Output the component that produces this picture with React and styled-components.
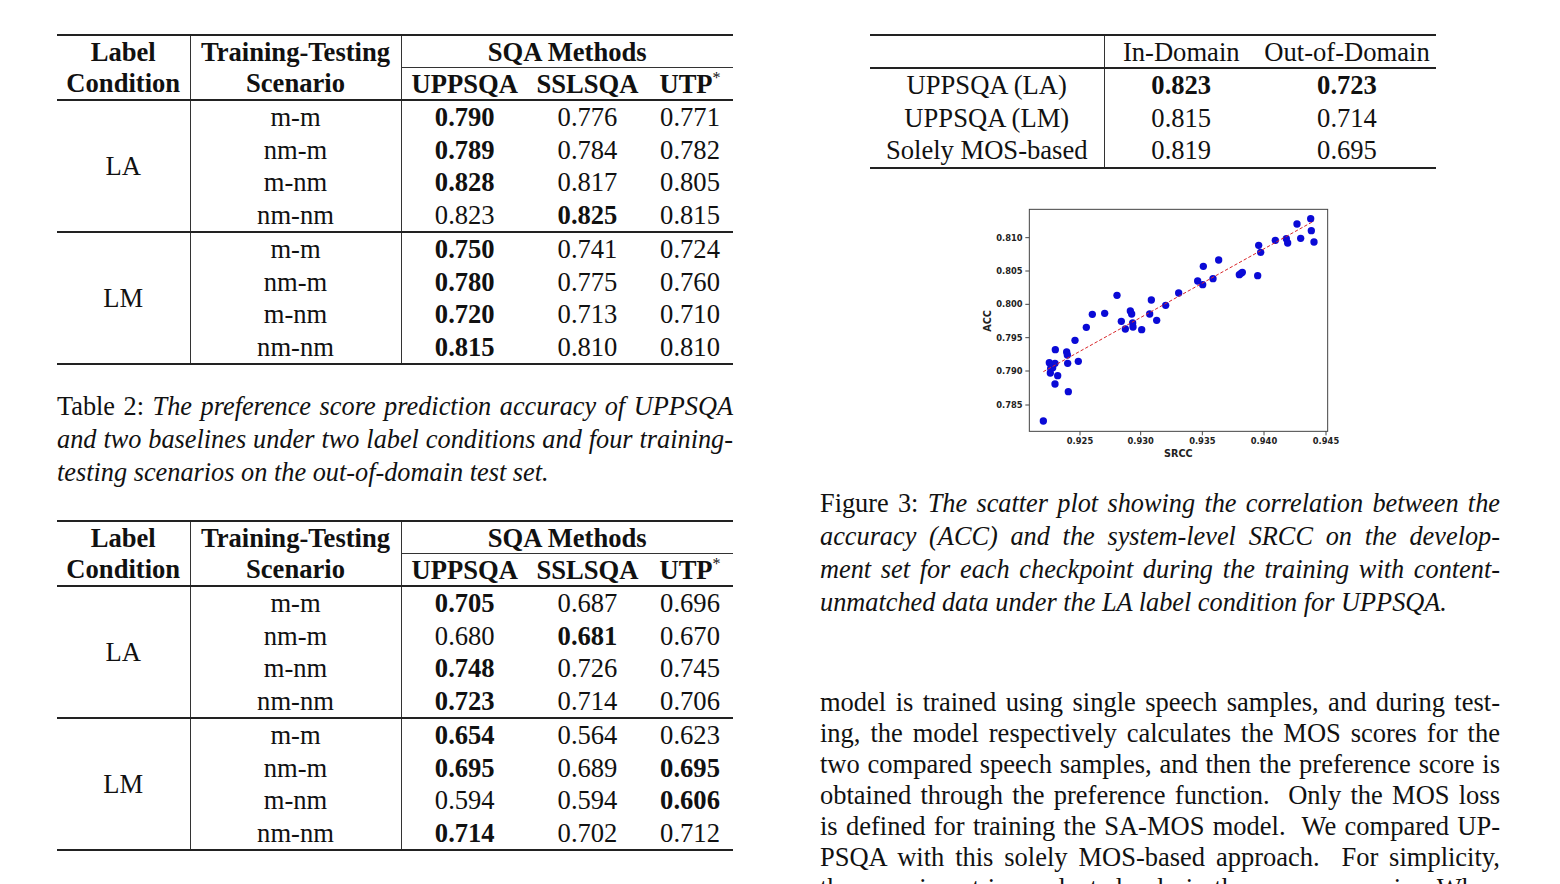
import React from "react";
import styled, { createGlobalStyle } from "styled-components";

const GlobalStyle = createGlobalStyle`
  html, body {
    margin: 0;
    padding: 0;
    background: #fff;
  }
  body {
    font-family: "Liberation Serif", "Times New Roman", serif;
    color: #111;
  }
`;

const Page = styled.div`
  display: flex;
  align-items: flex-start;
  gap: 87px;
  width: 1560px;
  height: 884px;
  padding: 34px 0 0 57px;
  box-sizing: border-box;
  overflow: hidden;
`;

const Column = styled.div`
  display: flex;
  flex-direction: column;
  width: ${(p) => p.$width}px;
  flex-shrink: 0;
`;

const Table = styled.table`
  border-collapse: collapse;
  table-layout: fixed;
  width: ${(p) => p.$width}px;
  margin: ${(p) => p.$margin || "0"};
  font-size: 26.6px;
  border-top: 2px solid #222;
  border-bottom: 2px solid #222;
`;

const Group = styled.tbody`
  border-top: 2px solid #222;
`;

const Cell = styled.td`
  height: ${(p) => (p.as === "th" ? 31 : 32.5)}px;
  padding: 0;
  line-height: 30px;
  text-align: center;
  vertical-align: middle;
  white-space: nowrap;
  font-weight: ${(p) => (p.$bold ? 700 : 400)};
  border-right: ${(p) => (p.$divider ? "1px solid #333" : "none")};
  border-bottom: ${(p) => (p.$underline ? "1px solid #333" : "none")};
`;

const Star = styled.sup`
  font-size: 16px;
  line-height: 0;
  vertical-align: 10px;
  font-weight: 400;
`;

const Caption = styled.div`
  margin-top: ${(p) => p.$top}px;
  font-size: 26.3px;
  line-height: 33px;
`;

const Line = styled.div`
  white-space: nowrap;
  text-align: justify;
  text-align-last: ${(p) => (p.$last ? "left" : "justify")};
`;

const Em = styled.i`
  font-style: italic;
`;

const Figure = styled.div`
  display: flex;
  justify-content: center;
  margin-top: 27px;
`;

const Body = styled.div`
  margin-top: 68px;
  font-size: 26.5px;
  line-height: 31px;
`;

const resultsOne = [
  {
    label: "LA",
    rows: [
      ["m-m", ["0.790", "0.776", "0.771"], [0]],
      ["nm-m", ["0.789", "0.784", "0.782"], [0]],
      ["m-nm", ["0.828", "0.817", "0.805"], [0]],
      ["nm-nm", ["0.823", "0.825", "0.815"], [1]],
    ],
  },
  {
    label: "LM",
    rows: [
      ["m-m", ["0.750", "0.741", "0.724"], [0]],
      ["nm-m", ["0.780", "0.775", "0.760"], [0]],
      ["m-nm", ["0.720", "0.713", "0.710"], [0]],
      ["nm-nm", ["0.815", "0.810", "0.810"], [0]],
    ],
  },
];

const resultsTwo = [
  {
    label: "LA",
    rows: [
      ["m-m", ["0.705", "0.687", "0.696"], [0]],
      ["nm-m", ["0.680", "0.681", "0.670"], [1]],
      ["m-nm", ["0.748", "0.726", "0.745"], [0]],
      ["nm-nm", ["0.723", "0.714", "0.706"], [0]],
    ],
  },
  {
    label: "LM",
    rows: [
      ["m-m", ["0.654", "0.564", "0.623"], [0]],
      ["nm-m", ["0.695", "0.689", "0.695"], [0, 2]],
      ["m-nm", ["0.594", "0.594", "0.606"], [2]],
      ["nm-nm", ["0.714", "0.702", "0.712"], [0]],
    ],
  },
];

const ScoreTable = ({ groups }) => (
  <Table $width={676}>
    <colgroup>
      <col style={{ width: 133 }} />
      <col style={{ width: 211 }} />
      <col style={{ width: 127 }} />
      <col style={{ width: 119 }} />
      <col style={{ width: 86 }} />
    </colgroup>
    <thead>
      <tr>
        <Cell as="th" $bold $divider>Label</Cell>
        <Cell as="th" $bold $divider>Training-Testing</Cell>
        <Cell as="th" $bold $underline colSpan={3}>SQA Methods</Cell>
      </tr>
      <tr>
        <Cell as="th" $bold $divider>Condition</Cell>
        <Cell as="th" $bold $divider>Scenario</Cell>
        <Cell as="th" $bold>UPPSQA</Cell>
        <Cell as="th" $bold>SSLSQA</Cell>
        <Cell as="th" $bold>UTP<Star>*</Star></Cell>
      </tr>
    </thead>
    {groups.map((g) => (
      <Group key={g.label}>
        {g.rows.map(([scenario, values, best], i) => (
          <tr key={scenario}>
            {i === 0 && (
              <Cell rowSpan={4} $divider>{g.label}</Cell>
            )}
            <Cell $divider>{scenario}</Cell>
            {values.map((v, j) => (
              <Cell key={j} $bold={best.includes(j)}>{v}</Cell>
            ))}
          </tr>
        ))}
      </Group>
    ))}
  </Table>
);

const domainRows = [
  ["UPPSQA (LA)", "0.823", "0.723", true],
  ["UPPSQA (LM)", "0.815", "0.714", false],
  ["Solely MOS-based", "0.819", "0.695", false],
];

const DomainTable = () => (
  <Table $width={566} $margin="0 0 0 50px">
    <colgroup>
      <col style={{ width: 234 }} />
      <col style={{ width: 154 }} />
      <col style={{ width: 178 }} />
    </colgroup>
    <thead>
      <tr>
        <Cell as="th" $divider></Cell>
        <Cell as="th">In-Domain</Cell>
        <Cell as="th">Out-of-Domain</Cell>
      </tr>
    </thead>
    <Group>
      {domainRows.map(([name, a, b, best]) => (
        <tr key={name}>
          <Cell $divider>{name}</Cell>
          <Cell $bold={best}>{a}</Cell>
          <Cell $bold={best}>{b}</Cell>
        </tr>
      ))}
    </Group>
  </Table>
);

// points read off the plot, in a 1140 x 810 drawing space
const points = [
  [220, 675], [238, 500], [241, 531], [248, 515], [255, 502], [256, 461],
  [263, 539], [255, 564], [242, 517], [290, 468], [292, 477], [293, 502],
  [295, 587], [315, 433], [325, 496], [349, 394], [367, 355], [404, 352],
  [441, 298], [454, 376], [466, 399], [481, 345], [485, 354], [488, 381],
  [489, 393], [515, 401], [539, 354], [544, 312], [560, 373], [587, 328],
  [626, 291], [683, 255], [698, 266], [700, 211], [729, 248], [746, 192],
  [808, 236], [813, 232], [817, 229], [863, 239], [866, 148], [872, 169],
  [916, 133], [949, 128], [953, 141], [981, 84], [992, 127], [1022, 68],
  [1024, 104], [1032, 138],
];

const xTicks = [
  [330, "0.925"], [512, "0.930"], [697, "0.935"], [882, "0.940"], [1068, "0.945"],
];
const yTicks = [
  [125, "0.810"], [225, "0.805"], [325, "0.800"], [425, "0.795"], [525, "0.790"], [627, "0.785"],
];

const ScatterPlot = () => (
  <svg width="380" height="270" viewBox="0 0 1140 810">
    <g fontFamily="'DejaVu Sans', sans-serif" fontWeight="700" fill="#222">
      <rect x="178" y="40" width="895" height="666" fill="none" stroke="#444" strokeWidth="3" />
      {xTicks.map(([x, t]) => (
        <g key={t}>
          <line x1={x} y1="706" x2={x} y2="718" stroke="#444" strokeWidth="3" />
          <text x={x} y="745" fontSize="25" textAnchor="middle">{t}</text>
        </g>
      ))}
      {yTicks.map(([y, t]) => (
        <g key={t}>
          <line x1="166" y1={y} x2="178" y2={y} stroke="#444" strokeWidth="3" />
          <text x="158" y={y + 9} fontSize="25" textAnchor="end">{t}</text>
        </g>
      ))}
      <text x="625" y="782" fontSize="29" textAnchor="middle">SRCC</text>
      <text x="62" y="375" fontSize="29" textAnchor="middle" transform="rotate(-90 62 375)">ACC</text>
    </g>
    {points.map(([x, y], i) => (
      <circle key={i} cx={x} cy={y} r="11" fill="#0a0ad6" />
    ))}
    <line x1="220" y1="527" x2="1032" y2="75" stroke="#d9262a" strokeWidth="3" strokeDasharray="10 6" />
  </svg>
);

const App = () => (
  <>
    <GlobalStyle />
    <Page>
      <Column $width={676}>
        <ScoreTable groups={resultsOne} />
        <Caption $top={25}>
          <Line>Table 2: <Em>The preference score prediction accuracy of UPPSQA</Em></Line>
          <Line><Em>and two baselines under two label conditions and four training-</Em></Line>
          <Line $last><Em>testing scenarios on the out-of-domain test set.</Em></Line>
        </Caption>
        <Caption $top={31}>
          <ScoreTable groups={resultsTwo} />
        </Caption>
      </Column>

      <Column $width={680}>
        <DomainTable />
        <Figure>
          <ScatterPlot />
        </Figure>
        <Caption $top={21}>
          <Line>Figure 3: <Em>The scatter plot showing the correlation between the</Em></Line>
          <Line><Em>accuracy (ACC) and the system-level SRCC on the develop-</Em></Line>
          <Line><Em>ment set for each checkpoint during the training with content-</Em></Line>
          <Line $last><Em>unmatched data under the LA label condition for UPPSQA.</Em></Line>
        </Caption>
        <Body>
          <Line>model is trained using single speech samples, and during test-</Line>
          <Line>ing, the model respectively calculates the MOS scores for the</Line>
          <Line>two compared speech samples, and then the preference score is</Line>
          <Line>obtained through the preference function.&nbsp; Only the MOS loss</Line>
          <Line>is defined for training the SA-MOS model.&nbsp; We compared UP-</Line>
          <Line>PSQA with this solely MOS-based approach.&nbsp; For simplicity,</Line>
          <Line>the experiment is conducted only in the m-nm scenario.&nbsp; When</Line>
        </Body>
      </Column>
    </Page>
  </>
);

export default App;
